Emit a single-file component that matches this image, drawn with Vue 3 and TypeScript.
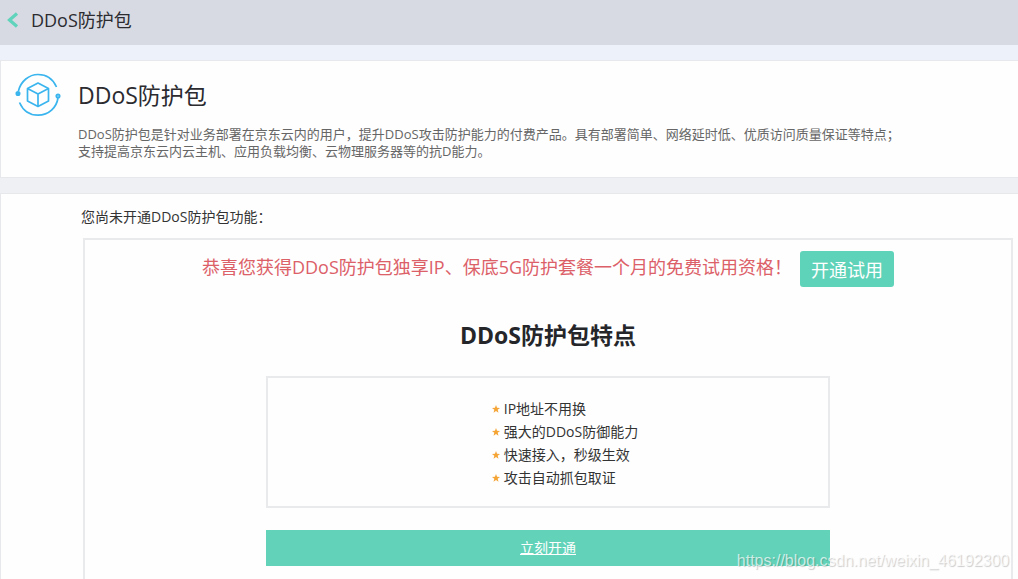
<script setup lang="ts">
const productName = 'DDoS防护包'
const features: string[] = [
  'IP地址不用换',
  '强大的DDoS防御能力',
  '快速接入，秒级生效',
  '攻击自动抓包取证',
]
</script>

<template>
  <div class="page">
    <header class="topbar">
      <button class="back" type="button" aria-label="返回">
        <svg width="12" height="16" viewBox="0 0 12 16" aria-hidden="true">
          <path d="M10 1.5 2.5 8 10 14.5" fill="none" stroke="#5fd3bb" stroke-width="3.2" />
        </svg>
      </button>
      <span class="topbar-title">{{ productName }}</span>
    </header>

    <section class="card intro">
      <svg class="logo" width="46" height="44" viewBox="0 0 46 44" fill="none" stroke="#3bb5ee" stroke-width="1.7" aria-hidden="true">
        <path d="M3.4 18 C6 8 14 1.5 23 1.5 C31.500 1.500 38 6 41.500 14" />
        <path d="M4.500 29.500 C8 37.500 15 42.200 23 42.200 C34 42.200 41.500 34.500 43 25" />
        <circle cx="3" cy="20.500" r="1.700" fill="#3bb5ee" />
        <circle cx="43" cy="23" r="1.700" fill="#8fd3f4" />
        <path d="M23 10 33.500 15.500 V28 L23 33.500 12.500 28 V15.500 Z M12.500 15.500 23 21 33.500 15.500 M23 21 V33.500" stroke-linejoin="round" />
      </svg>
      <div class="intro-text">
        <h1>{{ productName }}</h1>
        <p>
          DDoS防护包是针对业务部署在京东云内的用户，提升DDoS攻击防护能力的付费产品。具有部署简单、网络延时低、优质访问质量保证等特点；<br />
          支持提高京东云内云主机、应用负载均衡、云物理服务器等的抗D能力。
        </p>
      </div>
    </section>

    <main class="card content">
      <p class="status">您尚未开通DDoS防护包功能：</p>
      <div class="panel">
        <div class="offer">
          <span>恭喜您获得DDoS防护包独享IP、保底5G防护套餐一个月的免费试用资格！</span>
          <button class="trial" type="button">开通试用</button>
        </div>
        <h2>DDoS防护包特点</h2>
        <div class="features">
          <ul>
            <li v-for="feature in features" :key="feature">
              <svg width="8" height="8" viewBox="0 0 10 10" aria-hidden="true">
                <path d="M5 0 6.300 3.500 10 3.700 7.100 6 8.100 9.700 5 7.600 1.900 9.700 2.900 6 0 3.700 3.700 3.500Z" fill="#f5a536" />
              </svg>
              {{ feature }}
            </li>
          </ul>
        </div>
        <button class="activate" type="button">立刻开通</button>
      </div>
    </main>
    <span class="watermark">https://blog.csdn.net/weixin_46192300</span>
  </div>
</template>

<style>
body {
  margin: 0;
  background: #eff0f3;
}
</style>

<style scoped>
.page {
  position: relative;
  height: 100vh;
  overflow: hidden;
  display: flex;
  flex-direction: column;
  font-family: "Open Sans", "Noto Sans CJK SC", sans-serif;
  font-size: 14px;
  color: #333;
}

h1,
h2,
p,
ul {
  margin: 0;
  padding: 0;
}

button {
  border: 0;
  padding: 0;
  font-family: inherit;
  color: #fff;
  cursor: pointer;
}

.topbar {
  flex: none;
  display: flex;
  align-items: center;
  gap: 12px;
  box-sizing: border-box;
  height: 45px;
  padding: 0 7px 5px;
  background: #d7dae2;
}

.back {
  display: flex;
  background: none;
}

.topbar-title {
  font-size: 18px;
  line-height: 24px;
  color: #2b2b30;
}

.card {
  background: #fefefe;
  border: 1px solid #e7e8eb;
  border-right: 0;
}

.intro {
  flex: none;
  display: flex;
  gap: 17px;
  margin-top: 15px;
  padding: 12px 14px 17px;
  box-shadow: 0 -15px #edf1f9;
}

.logo {
  flex: none;
}

h1 {
  font-size: 23px;
  line-height: 44px;
  font-weight: 400;
  color: #2b2b30;
}

.intro-text p {
  margin-top: 9px;
  font-size: 13px;
  line-height: 17px;
  color: #666;
}

.content {
  flex: 1;
  display: flex;
  flex-direction: column;
  margin-top: 15px;
  padding: 12px 5px 0 80px;
  border-bottom: 0;
}

.status {
  line-height: 22px;
}

.panel {
  flex: 1;
  display: flex;
  flex-direction: column;
  align-items: center;
  margin: 10px 0 0 2px;
  border: 2px solid #e9eaec;
  border-bottom: 0;
}

.offer {
  display: flex;
  align-items: flex-start;
  gap: 8px;
  margin-top: 11px;
  font-size: 18px;
  line-height: 32px;
  color: #dc6068;
}

.trial {
  padding: 3px 11px 1px;
  border-radius: 3px;
  background: #5fd3b9;
  font-size: 18px;
  line-height: 32px;
}

h2 {
  margin-top: 31px;
  font-size: 23px;
  line-height: 34px;
  font-weight: 700;
  color: #25262a;
}

.features {
  display: flex;
  justify-content: center;
  box-sizing: border-box;
  width: 61%;
  margin-top: 24px;
  padding: 19px 0 17px;
  border: 2px solid #e9eaec;
}

ul {
  list-style: none;
  padding-left: 34px;
}

li {
  display: flex;
  align-items: center;
  gap: 4px;
  line-height: 23px;
}

.activate {
  width: 61%;
  margin-top: 22px;
  background: #62d3b9;
  font-size: 14px;
  line-height: 36px;
  text-decoration: underline;
}

.watermark {
  position: absolute;
  right: 9px;
  bottom: 8px;
  font-family: "Liberation Sans", Arial, sans-serif;
  font-size: 16px;
  line-height: 20px;
  color: rgba(255, 255, 255, 0.7);
  text-shadow: 1px 1px 1px rgba(0, 0, 0, 0.2);
}
</style>
